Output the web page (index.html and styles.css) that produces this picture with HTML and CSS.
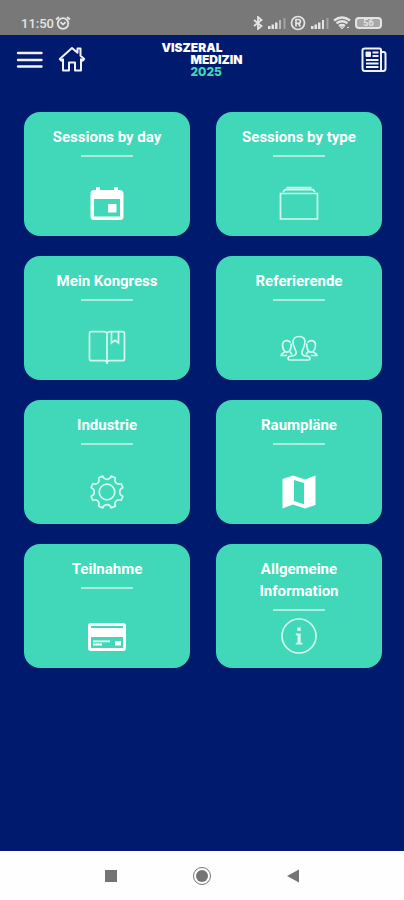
FILE: index.html
```html
<!DOCTYPE html>
<html lang="de">
<head>
<meta charset="utf-8">
<meta name="viewport" content="width=device-width, initial-scale=1">
<title>Viszeralmedizin 2025</title>
<link rel="stylesheet" href="styles.css">
</head>
<body>
<div class="status">
  <div class="status-group">
    <span class="clock">11:50</span>
    <svg class="alarm" width="16" height="14" viewBox="0 0 16 14" fill="none" stroke="currentColor" stroke-width="1.8"><circle cx="8" cy="7.5" r="5.3"/><path d="M1 3.5 4 1M15 3.5 12 1M5.5 6.2 8 8.6l2.6-2.4"/></svg>
  </div>
  <div class="status-group">
    <svg width="10" height="14" viewBox="0 0 10 14" fill="none" stroke="currentColor" stroke-width="1.8"><path d="M1 4l7.500 6L5 13V1l3.500 3L1 10"/></svg>
    <svg width="19" height="12" viewBox="0 0 19 12" fill="currentColor"><path d="M1 9h2.500v3H1zM4.500 7.500H7V12H4.500zM8 5.500h2.500V12H8z"/><path opacity=".6" d="M12 3h2v9h-2z"/><path opacity=".4" d="M16.500 1h2v11h-2z"/></svg>
    <svg width="16" height="16" viewBox="0 0 16 16" fill="none" stroke="currentColor" stroke-width="1.700"><circle cx="8" cy="8" r="6.500"/><path d="M6 11.500v-7h2.500a1.800 1.800 0 0 1 0 3.800H6M8.300 8.300l2 3.200"/></svg>
    <svg width="19" height="12" viewBox="0 0 19 12" fill="currentColor"><path d="M1 9h2.500v3H1zM4.500 7.500H7V12H4.500zM8 5.500h2.500V12H8zM12 3h2v9h-2z"/><path opacity=".4" d="M16.500 1h2v11h-2z"/></svg>
    <svg width="18" height="14" viewBox="0 0 18 14" fill="none" stroke="currentColor" stroke-width="2.300"><path d="M1 4.500q8-6 16 0M3.500 7.300q5.500-4 11 0M6 10q3-2 6 0"/><path d="M7.500 11h3L9 13zM14 11.500h2" stroke-width="1"/></svg>
    <span class="battery">56</span>
  </div>
</div>

<header class="topbar">
  <div class="topbar-left">
    <button class="icon-btn" type="button" aria-label="Menü">
      <svg width="28" height="28" viewBox="0 0 28 28" fill="none" stroke="currentColor" stroke-width="2.400" stroke-linecap="round"><path d="M2 7h23.500M2 14h23.500M2 20.500h23.500"/></svg>
    </button>
    <a class="icon-btn" href="#" aria-label="Startseite">
      <svg width="28" height="28" viewBox="0 0 28 28" fill="none" stroke="currentColor" stroke-width="2" stroke-linejoin="round"><path d="M14 2 1.800 13l1.500 1.700 1.700-1.400v11.200h6v-8h6v8h6V13.300l1.700 1.400 1.500-1.700-3.700-3.300V2.500h-3V6.700z"/></svg>
    </a>
  </div>
  <h1 class="logo"><span>VISZERAL</span><span class="logo-in">MEDIZIN</span><span class="logo-in logo-year">2025</span></h1>
  <a class="icon-btn topbar-news" href="#" aria-label="News">
    <svg width="28" height="28" viewBox="0 0 28 28" fill="none" stroke="currentColor" stroke-width="2" stroke-linejoin="round"><path d="M5 2.500h14.500q1.500 0 1.500 1.500v21H5q-2.500 0-2.500-2.500V4q0-1.500 2.500-1.500zM21 6h2.500q2 0 2 2v14.500q0 2.500-2.500 2.500h-2.500"/><path d="M12.500 6.500h6M12.500 10h6M6 14h12.500M6 17.500h12.500M6 21h12.500"/><path d="M6 6h4.500v4.500H6z" fill="currentColor" stroke-width="1"/></svg>
  </a>
</header>

<main class="tiles">
  <a class="tile" href="#"><span class="tile-title">Sessions by day</span>
    <svg class="tile-icon" viewBox="0 0 40 40" fill="currentColor"><path fill-rule="evenodd" d="M9 3h4v3h14V3h4v3h1.500Q36.500 6 36.500 10v22.500q0 3.500-3.500 3.500H7q-3.500 0-3.500-3.500V10q0-4 3.500-4h2zM7 15v17.500h26V15z"/><path d="M21 20h8.500v8.500H21z"/></svg></a>
  <a class="tile" href="#"><span class="tile-title">Sessions by type</span>
    <svg class="tile-icon line" viewBox="0 0 40 40"><path d="M1.500 9.500h37v25.500h-37zM4 8l2-2.300h28L36 8M7.500 3.700h25"/></svg></a>
  <a class="tile" href="#"><span class="tile-title">Mein Kongress</span>
    <svg class="tile-icon line" viewBox="0 0 40 40"><path d="M20 36V5q-1-1.300-3-1.300H4.500q-2 0-2 2v25q0 2 2 2h13q2.500 0 2.500 2 0-2 2.500-2h13q2 0 2-2v-25q0-2-2-2H23q-2 0-3 1.300M24.500 4v11l3.500-3 3.500 3V4"/></svg></a>
  <a class="tile" href="#"><span class="tile-title">Referierende</span>
    <svg class="tile-icon line" viewBox="0 0 40 40"><path d="M17 23.500c-1-3-3-5.500-3-9.500 0-3.500 2.500-5.500 6-5.500s6 2 6 5.500c0 4-2 6.500-3 9.500-.8 3 1.500 4.300 4.500 4.500 2.500.2 3.500 1 3.500 2.500 0 1-.5 1.500-1.500 1.500h-19c-1 0-1.500-.5-1.500-1.500 0-1.500 1-2.300 3.500-2.500 3-.2 5.300-1.500 4.500-4.500z"/><path d="M11.500 14.500c-1-1.300-2.300-2-4-1.900-2.600.1-4 2-4 4.900 0 2.700 1 4.600 2.200 6 .3 1.500-3.700 1.500-3.700 4H8M5.700 23.500c1.800 1 3.300.7 4.800-.5l2.500 3.500M10.500 23c1.200-1.500 1.700-3 1.700-5v-2.500M28.500 14.500c1-1.300 2.300-2 4-1.900 2.600.1 4 2 4 4.900 0 2.700-1 4.600-2.200 6-.3 1.500 3.700 1.500 3.700 4h-6M34.300 23.500c-1.800 1-3.300.7-4.800-.5L27 26.500M29.500 23c-1.200-1.500-1.700-3-1.700-5v-2.500"/></svg></a>
  <a class="tile" href="#"><span class="tile-title">Industrie</span>
    <svg class="tile-icon line" viewBox="0 0 40 40"><circle cx="20" cy="20" r="7.800"/><path stroke-linejoin="round" d="M15.700 4.100C17 8.400 23 8.400 24.300 4.100L28.300 5.700C27 10.500 29.500 13 34.300 11.700L35.900 15.700C31.600 17 31.600 23 35.900 24.300L34.300 28.300C29.500 27 27 29.500 28.300 34.300L24.300 35.900C23 31.600 17 31.600 15.700 35.900L11.700 34.300C13 29.500 10.500 27 5.700 28.300L4.100 24.300C8.400 23 8.400 17 4.100 15.700L5.700 11.700C10.500 13 13 10.500 11.700 5.700Z"/></svg></a>
  <a class="tile" href="#"><span class="tile-title">Raumpläne</span>
    <svg class="tile-icon" viewBox="0 0 40 40" fill="currentColor"><path fill-rule="evenodd" d="M3.500 7 14 3.500l12 4 10.500-4V33L26 36.500l-12-4-10.500 4zM15 8v21l10 3.200V11z"/></svg></a>
  <a class="tile" href="#"><span class="tile-title">Teilnahme</span>
    <svg class="tile-icon" viewBox="0 0 40 40" fill="currentColor"><path fill-rule="evenodd" d="M4 7h32q3 0 3 3v22q0 3-3 3H4q-3 0-3-3V10q0-3 3-3zM4 10v2h32v-2zM4 21v11h32V21z"/><path d="M6 24.500h17v1.800H6zM6 27.500h9v2H6zM28 25h6v4.500h-6z"/></svg></a>
  <a class="tile" href="#"><span class="tile-title">Allgemeine Information</span>
    <svg class="tile-icon line" viewBox="0 0 40 40"><circle cx="20" cy="20" r="17"/><path fill="currentColor" stroke="none" d="M18.300 11.500h3.400v3.400h-3.400zM16.800 17.500h4.900v9.300h1.800v1.700h-6.700v-1.700h1.700v-7.600h-1.700z"/></svg></a>
</main>

<nav class="sysnav">
  <button type="button" aria-label="Übersicht"><svg width="20" height="20" viewBox="0 0 20 20"><path d="M4 4h12v12H4z" fill="currentColor"/></svg></button>
  <button type="button" aria-label="Home"><svg width="20" height="20" viewBox="0 0 20 20"><circle cx="10" cy="10" r="8.500" fill="none" stroke="currentColor"/><circle cx="10" cy="10" r="6" fill="currentColor"/></svg></button>
  <button type="button" aria-label="Zurück"><svg width="20" height="20" viewBox="0 0 20 20"><path d="M16 3.500v13L4 10z" fill="currentColor"/></svg></button>
</nav>
</body>
</html>
```
FILE: styles.css
```css
* { box-sizing: border-box; }

body {
  margin: 0;
  min-height: 100vh;
  display: flex;
  flex-direction: column;
  background: #001a6e;
  color: #fff;
  font-family: Roboto, sans-serif;
}

svg { display: block; flex: none; }

a { color: inherit; text-decoration: none; }

button {
  padding: 0;
  border: 0;
  background: none;
  color: inherit;
}

.status {
  height: 35px;
  padding: 11px 22px 0 21px;
  display: flex;
  justify-content: space-between;
  background: #787878;
  color: #e4e4e4;
}

.status-group {
  height: 24px;
  display: flex;
  align-items: center;
  gap: 4px;
}

.clock {
  font-size: 13px;
  font-weight: 500;
}

.alarm { margin-left: -3px; }

.battery {
  width: 27px;
  height: 12px;
  border: 2px solid #e4e4e4;
  border-radius: 4px;
  background: #a8a8a8;
  font-size: 9px;
  font-weight: 700;
  line-height: 8px;
  text-align: center;
}

.topbar {
  padding: 7px 16px 0 16px;
  display: grid;
  grid-template-columns: 1fr auto 1fr;
  align-items: start;
}

.topbar-left {
  display: flex;
  gap: 14px;
}

.icon-btn {
  padding-top: 4px;
  color: #f0f3ff;
}

.topbar-news { justify-self: end; }

.logo {
  margin: 0;
  display: flex;
  flex-direction: column;
  font-family: Inter, sans-serif;
  font-size: 12px;
  font-weight: 900;
  line-height: 12px;
}

.logo-in { margin-left: 29px; }

.logo-year {
  color: #40d8b8;
  font-weight: 800;
}

.tiles {
  flex: 1;
  padding: 34px 22px 24px 24px;
  display: grid;
  grid-template-columns: 1fr 1fr;
  grid-auto-rows: min-content;
  gap: 20px 26px;
}

.tile {
  min-height: 124px;
  padding: 14px 20px 12px;
  display: flex;
  flex-direction: column;
  align-items: center;
  border-radius: 16px;
  background: #40d8b8;
}

.tile-title {
  display: flex;
  flex-direction: column;
  align-items: center;
  gap: 7px;
  font-size: 15px;
  font-weight: 700;
  line-height: 22px;
  text-align: center;
}

.tile-title::after {
  content: "";
  width: 52px;
  height: 2px;
  background: #a6f0df;
}

.tile-icon {
  width: 40px;
  height: 40px;
  margin-top: auto;
}

.line {
  fill: none;
  stroke: currentColor;
  stroke-width: 1.7;
  color: #d4faf0;
}

.sysnav {
  height: 49px;
  padding: 0 66px;
  display: flex;
  justify-content: space-around;
  align-items: center;
  background: #fefefe;
  color: #747474;
}
```
